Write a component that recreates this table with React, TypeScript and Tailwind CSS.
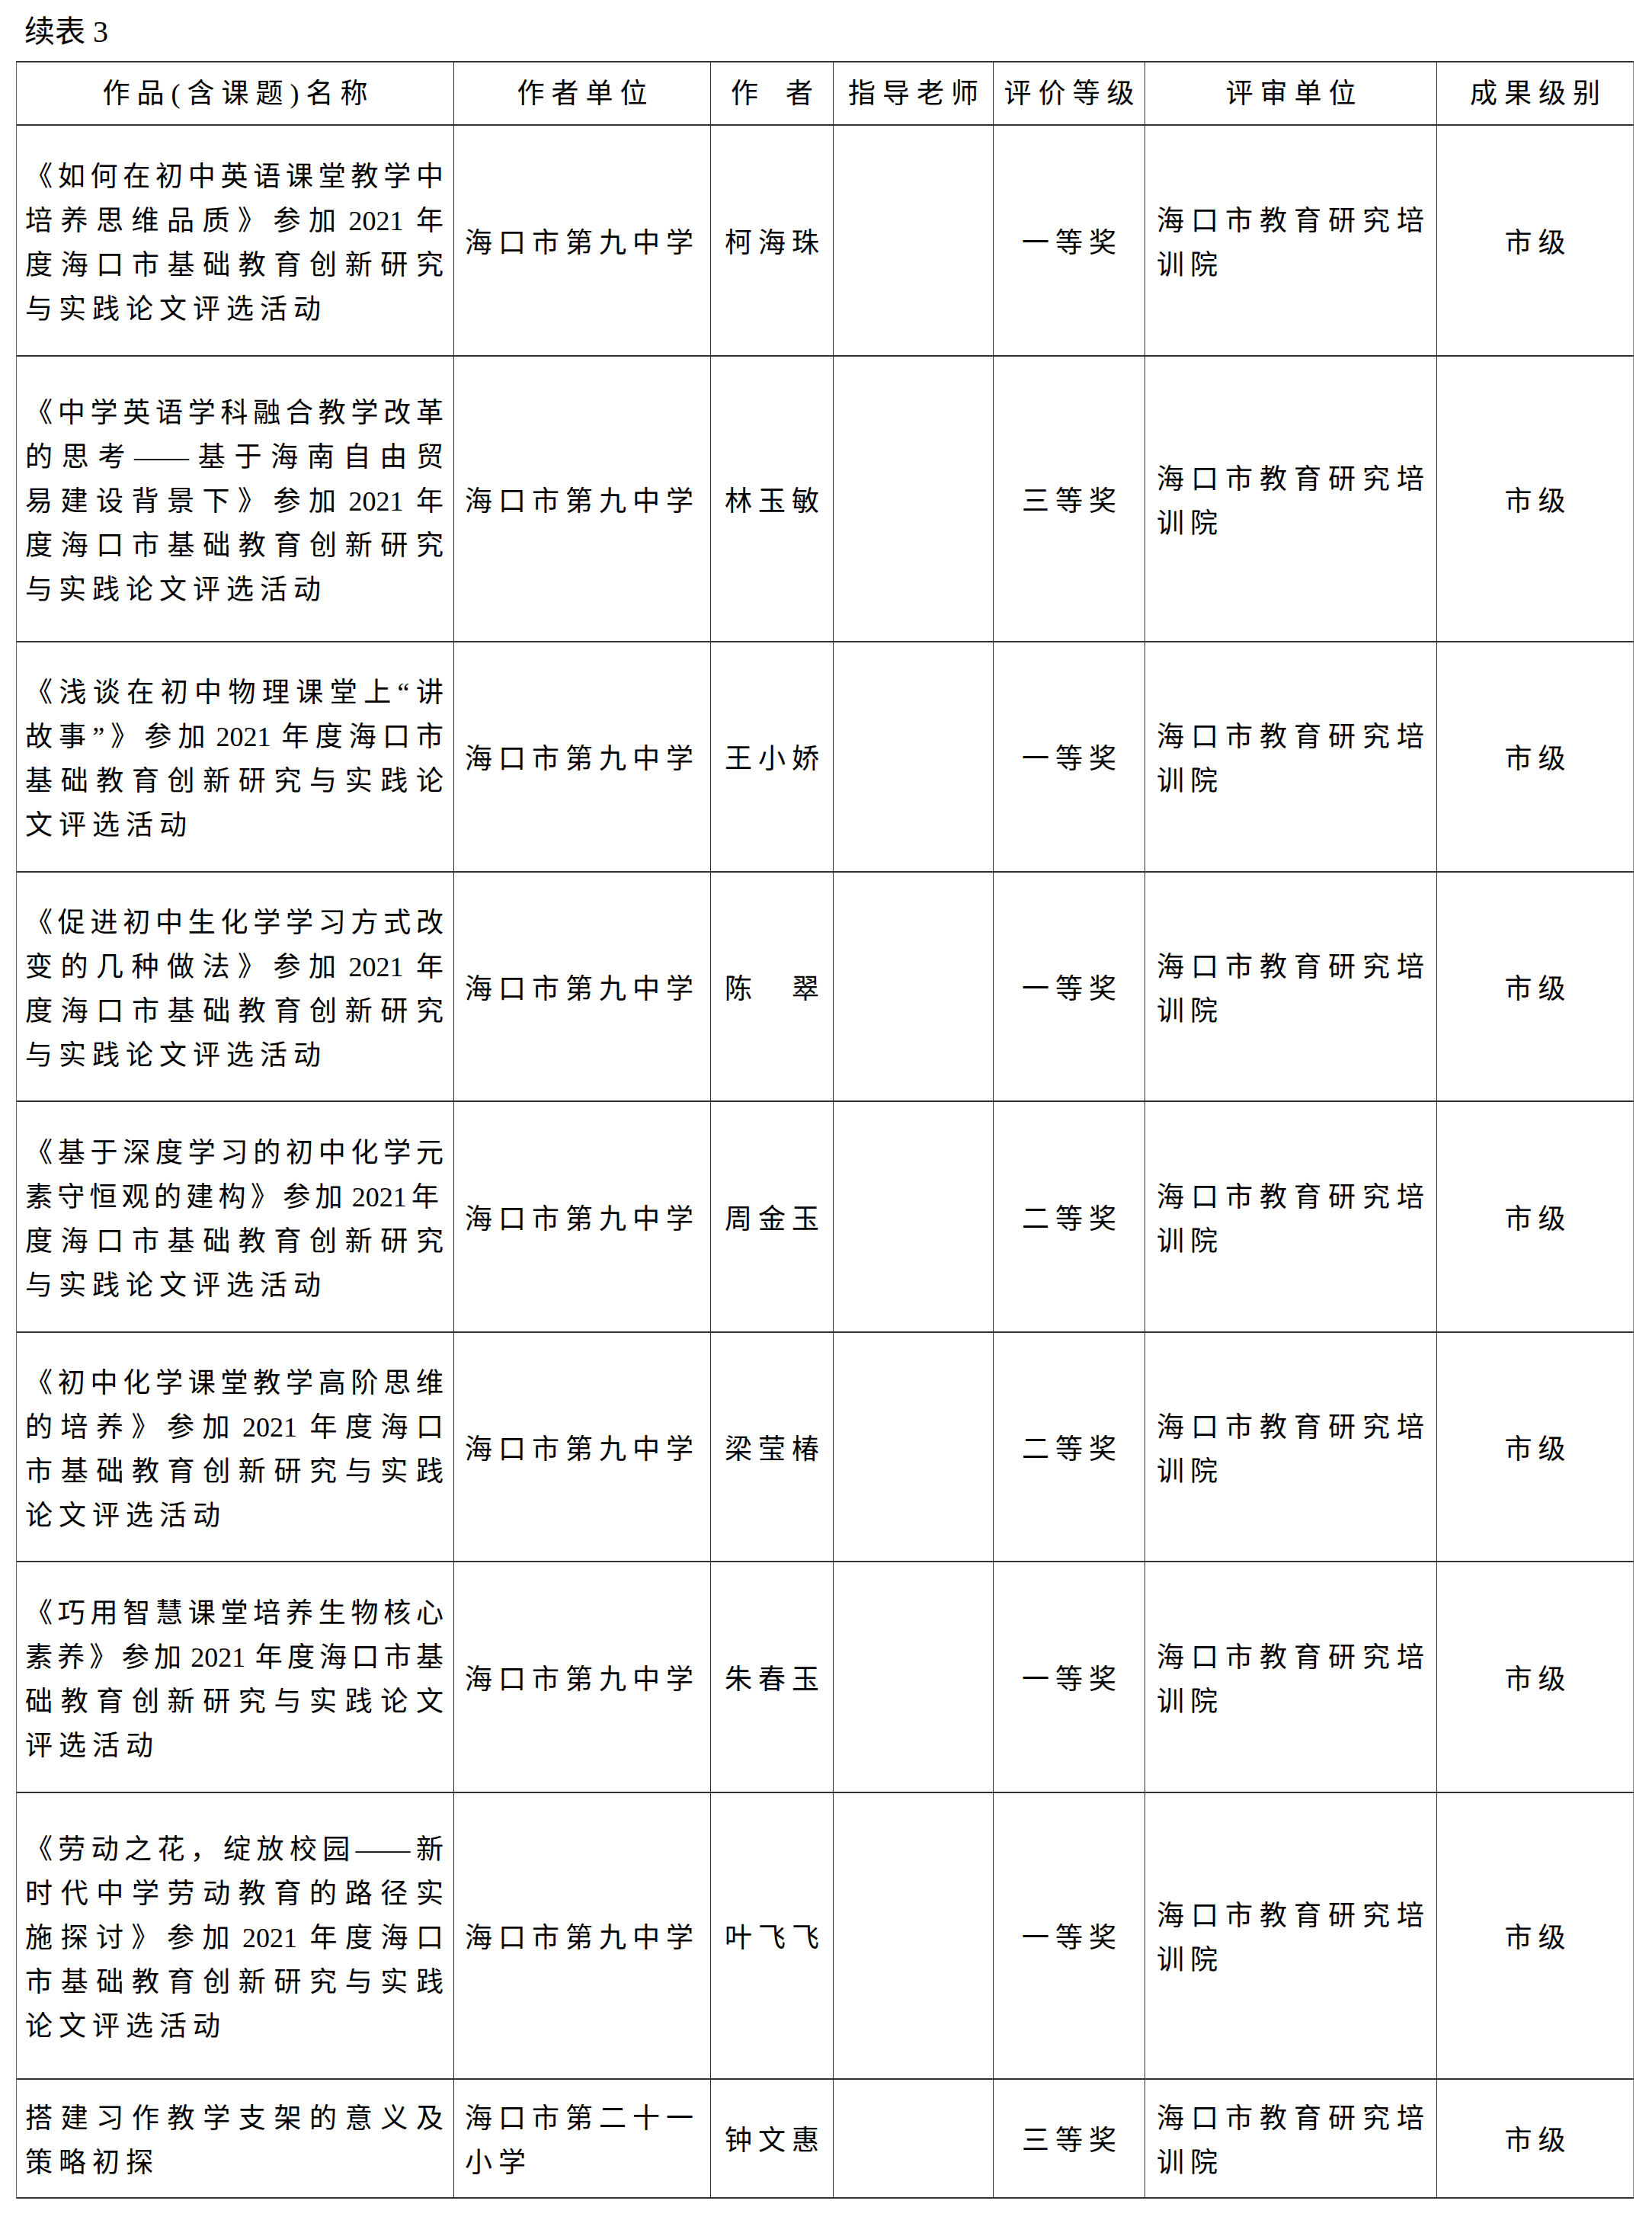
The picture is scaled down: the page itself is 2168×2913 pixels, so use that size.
import React from "react";

const cols = "grid grid-cols-[574px_337px_161px_210px_199px_383px_258px]";

type Row = {
  h: string;
  title: string[];
  unit: string[];
  author: string;
  grade: string;
};

const rows: Row[] = [
  {
    h: "h-[303px]",
    title: ["《如何在初中英语课堂教学中", "培养思维品质》参加|2021|年", "度海口市基础教育创新研究", "与实践论文评选活动"],
    unit: ["海口市第九中学"],
    author: "柯海珠",
    grade: "一等奖",
  },
  {
    h: "h-[375px]",
    title: ["《中学英语学科融合教学改革", "的思考——基于海南自由贸", "易建设背景下》参加|2021|年", "度海口市基础教育创新研究", "与实践论文评选活动"],
    unit: ["海口市第九中学"],
    author: "林玉敏",
    grade: "三等奖",
  },
  {
    h: "h-[302px]",
    title: ["《浅谈在初中物理课堂上“讲", "故事”》参加|2021|年度海口市", "基础教育创新研究与实践论", "文评选活动"],
    unit: ["海口市第九中学"],
    author: "王小娇",
    grade: "一等奖",
  },
  {
    h: "h-[301px]",
    title: ["《促进初中生化学学习方式改", "变的几种做法》参加|2021|年", "度海口市基础教育创新研究", "与实践论文评选活动"],
    unit: ["海口市第九中学"],
    author: "陈　翠",
    grade: "一等奖",
  },
  {
    h: "h-[303px]",
    title: ["《基于深度学习的初中化学元", "素守恒观的建构》参加|2021年", "度海口市基础教育创新研究", "与实践论文评选活动"],
    unit: ["海口市第九中学"],
    author: "周金玉",
    grade: "二等奖",
  },
  {
    h: "h-[301px]",
    title: ["《初中化学课堂教学高阶思维", "的培养》参加|2021|年度海口", "市基础教育创新研究与实践", "论文评选活动"],
    unit: ["海口市第九中学"],
    author: "梁莹椿",
    grade: "二等奖",
  },
  {
    h: "h-[303px]",
    title: ["《巧用智慧课堂培养生物核心", "素养》参加|2021|年度海口市基", "础教育创新研究与实践论文", "评选活动"],
    unit: ["海口市第九中学"],
    author: "朱春玉",
    grade: "一等奖",
  },
  {
    h: "h-[376px]",
    title: ["《劳动之花，绽放校园——新", "时代中学劳动教育的路径实", "施探讨》参加|2021|年度海口", "市基础教育创新研究与实践", "论文评选活动"],
    unit: ["海口市第九中学"],
    author: "叶飞飞",
    grade: "一等奖",
  },
  {
    h: "h-[156px]",
    title: ["搭建习作教学支架的意义及", "策略初探"],
    unit: ["海口市第二十一", "小学"],
    author: "钟文惠",
    grade: "三等奖",
  },
];

const headers = ["作品(含课题)名称", "作者单位", "作\u2002者", "指导老师", "评价等级", "评审单位", "成果级别"];

// "|" marks where the year sits; it gets a small fixed gap instead of a space,
// so justification doesn't blow the gap up
function Text({ s }: { s: string }) {
  const parts = s.split("|");
  return (
    <>
      {parts.map((p, i) =>
        /^\d/.test(p) ? (
          <span key={i} className="mx-[6px]">{p}</span>
        ) : (
          <React.Fragment key={i}>{p}</React.Fragment>
        )
      )}
    </>
  );
}

// every line but the last is stretched to the cell width, like the printed table
function Lines({ lines }: { lines: string[] }) {
  return (
    <div className="w-full">
      {lines.map((l, i) =>
        i < lines.length - 1 ? (
          <div key={i} className="whitespace-nowrap [text-align-last:justify]">
            <Text s={l} />
          </div>
        ) : (
          <div key={i} className="whitespace-nowrap tracking-[8px]">
            <Text s={l} />
          </div>
        )
      )}
    </div>
  );
}

function Cell({ children, className = "" }: { children?: React.ReactNode; className?: string }) {
  return <div className={`flex items-center border-r border-[#333] ${className}`}>{children}</div>;
}

export default function App() {
  return (
    <div className="h-[2913px] w-[2168px] bg-white font-['Liberation_Serif','Noto_Sans_CJK_SC',serif] text-[36px] leading-[58px] text-black">
      <div className="flex h-[80px] items-center pl-[32px] pt-[4px] text-[40px]">续表 3</div>

      <div className="ml-[21px] w-[2123px] border-l border-t-2 border-[#333] border-l-[#666]">
        <div className={`${cols} h-[83px] border-b-2 border-[#333]`}>
          {headers.map((h, i) => (
            <Cell key={h} className={`justify-center whitespace-nowrap pl-[9px] tracking-[9px] ${i === 6 ? "border-r-[#888]" : ""}`}>
              {h}
            </Cell>
          ))}
        </div>

        {rows.map((r, idx) => (
          <div key={idx} className={`${cols} ${r.h} border-b-2 border-[#333]`}>
            <Cell className="pl-[11px] pr-[13px] pt-[6px]">
              <Lines lines={r.title} />
            </Cell>
            <Cell className="pl-[14px] pt-[6px]">
              <div className="tracking-[8px]">
                {r.unit.map((u) => (
                  <div key={u} className="whitespace-nowrap">{u}</div>
                ))}
              </div>
            </Cell>
            <Cell className="justify-center whitespace-nowrap pl-[8px] pt-[6px] tracking-[8px]">{r.author}</Cell>
            <Cell />
            <Cell className="justify-center whitespace-nowrap pl-[8px] pt-[6px] tracking-[8px]">{r.grade}</Cell>
            <Cell className="pl-[15px] pr-[16px] pt-[6px]">
              <Lines lines={["海口市教育研究培", "训院"]} />
            </Cell>
            <Cell className="justify-center whitespace-nowrap border-r-[#888] pl-[8px] pt-[6px] tracking-[8px]">市级</Cell>
          </div>
        ))}
      </div>
    </div>
  );
}
